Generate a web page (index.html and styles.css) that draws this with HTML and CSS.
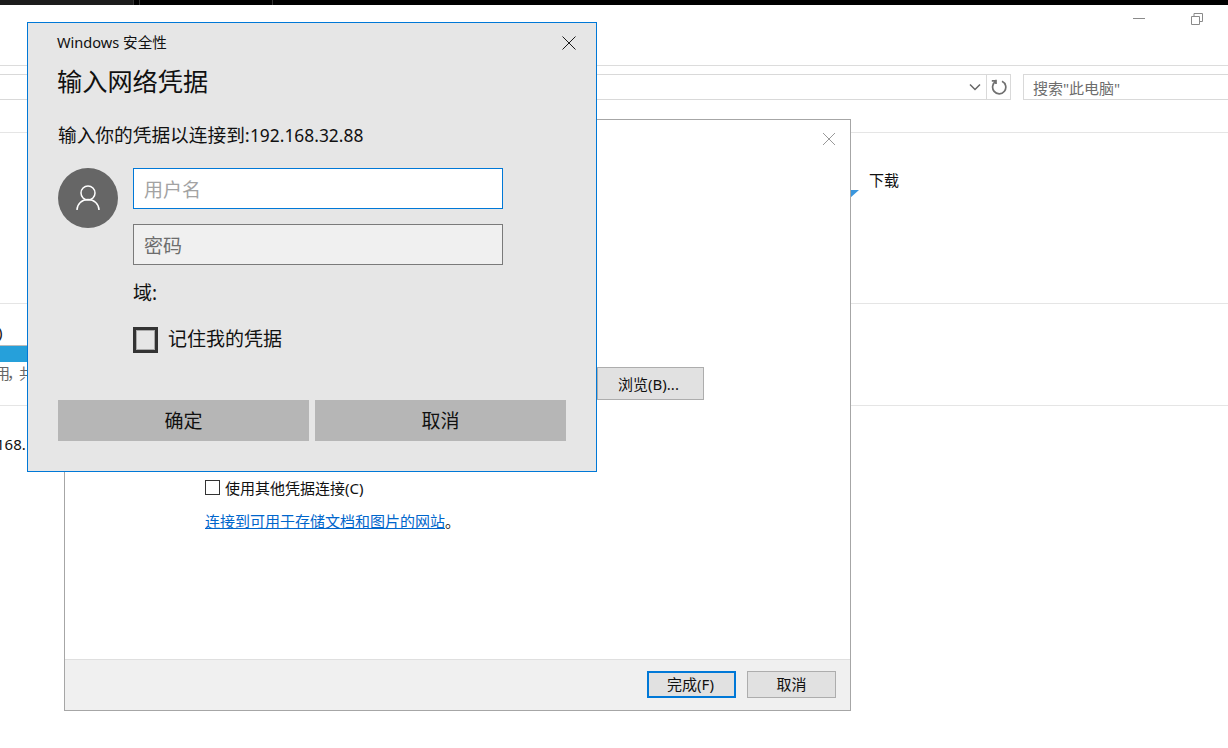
FILE: index.html
```html
<!DOCTYPE html>
<html lang="zh-CN">
<head>
<meta charset="utf-8">
<title>Windows 安全性</title>
<link rel="stylesheet" href="styles.css">
</head>
<body>
<div class="desktop">
  <div class="taskbar">
    <div class="task task-active"></div>
    <div class="task task-second"></div>
  </div>
  <div class="explorer">
    <div class="caption">
      <span class="cap-min"></span>
      <svg class="cap-restore" width="12" height="12" viewBox="0 0 12 12"><path d="M.5 3.500h8v8h-8zM3 3.500V.5h8.500v8H8.500" fill="none" stroke="#8a8a8a"/></svg>
    </div>
    <div class="addressbar">
      <div class="address">
        <svg class="chev" width="12" height="8" viewBox="0 0 12 8"><path d="M1 1.500l5 5 5-5" fill="none" stroke="#666" stroke-width="1.500"/></svg>
        <div class="refresh">
          <svg width="16" height="16" viewBox="0 0 16 16"><path d="M5.200 2.300A6.600 6.600 0 1 0 11 2.200M5 .8v4.200M.8 1.800h4.700" fill="none" stroke="#707070" stroke-width="1.700"/></svg>
        </div>
      </div>
      <div class="search">搜索"此电脑"</div>
    </div>
    <div class="ribbon">
      <span class="download">下载</span>
    </div>
    <div class="section">
      <span class="drive-name">D)</span>
      <div class="drive-bar"></div>
      <span class="drive-info">用，共</span>
    </div>
    <div class="netloc">168.</div>
  </div>

  <span class="tri"></span>

  <div class="wizard">
    <svg class="wiz-close" width="14" height="14" viewBox="0 0 14 14"><path d="M1 1l12 12M13 1L1 13" stroke="#999" fill="none"/></svg>
    <div class="wiz-body">
      <button class="browse">浏览(B)...</button>
      <label class="other-cred"><span class="small-check"></span>使用其他凭据连接(C)</label>
      <p class="site-line"><a class="site-link">连接到可用于存储文档和图片的网站</a>。</p>
    </div>
    <div class="wiz-foot">
      <button class="wiz-btn wiz-primary">完成(F)</button>
      <button class="wiz-btn">取消</button>
    </div>
  </div>

  <div class="dialog">
    <div class="dlg-title">
      <span class="dlg-app">Windows 安全性</span>
      <svg width="14" height="14" viewBox="0 0 14 14"><path d="M.5.500l13 13M13.500.500l-13 13" stroke="#1a1a1a" fill="none"/></svg>
    </div>
    <h1 class="dlg-head">输入网络凭据</h1>
    <p class="dlg-sub">输入你的凭据以连接到:<span class="dlg-ip">192.168.32.88</span></p>
    <div class="cred">
      <div class="avatar">
        <svg width="26" height="28" viewBox="0 0 26 28"><circle cx="13" cy="9" r="7" fill="none" stroke="#fff" stroke-width="1.500"/><path d="M2 26c0-6 5-10.500 11-10.500S24 20 24 26" fill="none" stroke="#fff" stroke-width="1.500"/></svg>
      </div>
      <div class="fields">
        <div class="field field-focus">用户名</div>
        <div class="field field-off">密码</div>
        <div class="domain">域:</div>
        <label class="remember"><span class="big-check"></span>记住我的凭据</label>
      </div>
    </div>
    <div class="dlg-btns">
      <button class="dlg-btn">确定</button>
      <button class="dlg-btn">取消</button>
    </div>
  </div>
</div>
</body>
</html>
```
FILE: styles.css
```css
* { box-sizing: border-box; }
html, body { margin: 0; padding: 0; }
body { font-family: "Noto Sans", "Noto Sans CJK SC", sans-serif; color: #111; background: #fff; }
button { font-family: inherit; padding: 0; color: inherit; }
.desktop { position: relative; width: 1228px; height: 748px; overflow: hidden; background: #fff; }

.taskbar { height: 5px; background: #000; display: flex; }
.task { height: 5px; }
.task-active { width: 134px; background: #1c1c1c; border-right: 1px solid #333; }
.task-second { width: 134px; margin-left: 5px; background: #000; border-left: 1px solid #333; border-right: 1px solid #333; }

.explorer { font-size: 15px; }
.caption { height: 61px; border-bottom: 1px solid #dcdcdc; display: flex; justify-content: flex-end; padding: 8px 25px 0 0; }
.cap-min { width: 12px; height: 1px; background: #8a8a8a; margin: 5px 46px 0 0; }
.cap-restore { margin-top: 0; }

.addressbar { display: flex; height: 26px; margin-top: 8px; gap: 12px; }
.address { width: 1011px; height: 26px; border: 1px solid #d9d9d9; border-left: 0; display: flex; justify-content: flex-end; align-items: center; }
.chev { margin-right: 5px; }
.refresh { width: 24px; height: 24px; border-left: 1px solid #d9d9d9; display: flex; align-items: center; justify-content: center; }
.search { flex: 1; height: 26px; border: 1px solid #d9d9d9; border-right: 0; padding-left: 9px; line-height: 26px; font-size: 15px; color: #6d6d6d; }

.ribbon { height: 172px; margin-top: 32px; border-top: 1px solid #e5e5e5; border-bottom: 1px solid #e5e5e5; padding: 36px 0 0 869px; line-height: 22px; }
.download { font-size: 15px; }
.section { height: 102px; border-bottom: 1px solid #e5e5e5; position: relative; padding-top: 17px; }
.drive-name { display: block; margin-left: -13px; line-height: 22px; font-size: 15px; }
.drive-bar { width: 30px; height: 17px; margin-top: 2px; background: #26a0da; border-top: 1px solid #bcbcbc; }
.drive-info { display: block; margin-left: -5px; letter-spacing: -3px; line-height: 22px; font-size: 15px; color: #666; }
.netloc { margin: 27px 0 0 -4px; line-height: 22px; font-size: 15px; }

.tri { position: absolute; left: 850px; top: 190px; width: 9px; height: 8px; background: #3a96dd; clip-path: polygon(0 0, 100% 0, 0 100%); }

.wizard { position: absolute; left: 64px; top: 119px; width: 787px; height: 592px; background: #fff; border: 1px solid #a6a6a6; display: flex; flex-direction: column; font-size: 15px; }
.wiz-close { position: absolute; left: 757px; top: 12px; }
.wiz-body { flex: 1; padding: 247px 0 0 140px; }
.browse { display: block; margin-left: 392px; width: 107px; height: 33px; background: #e1e1e1; border: 1px solid #adadad; font-size: 15px; padding-right: 4px; }
.other-cred { display: flex; align-items: center; margin-top: 76px; height: 22px; color: #111; }
.small-check { width: 15px; height: 15px; border: 1px solid #333; background: #fff; margin-right: 5px; }
.site-line { margin: 12px 0 0; line-height: 22px; height: 22px; }
.site-link { color: #0066cc; text-decoration: underline; }
.wiz-foot { height: 51px; background: #f0f0f0; border-top: 1px solid #dfdfdf; display: flex; justify-content: flex-end; gap: 11px; padding: 11px 14px 0 0; }
.wiz-btn { width: 89px; height: 27px; background: #e1e1e1; border: 1px solid #adadad; font-size: 15px; line-height: 22px; padding-bottom: 2px; }
.wiz-primary { border: 2px solid #0078d7; padding-right: 2px; }

.dialog { position: absolute; left: 27px; top: 22px; width: 570px; height: 450px; background: #e6e6e6; border: 1px solid #0078d7; padding: 0 30px; color: #111; }
.dlg-title { height: 40px; display: flex; justify-content: space-between; align-items: center; margin-left: -1px; margin-right: -10px; font-size: 14.600px; }
.dlg-app { padding-bottom: 4px; }
.dlg-head { margin: 0 0 0 -1px; height: 40px; font-size: 25.200px; font-weight: 400; line-height: 36px; }
.dlg-sub { margin: 18px 0 0; height: 28px; font-size: 18.700px; line-height: 28px; }
.dlg-ip { font-size: 17.400px; }
.cred { display: flex; margin-top: 19px; gap: 15px; }
.avatar { width: 60px; height: 60px; border-radius: 50%; background: #666; display: flex; align-items: center; justify-content: center; }
.fields { width: 370px; }
.field { height: 41px; padding-left: 10px; font-size: 19px; }
.field-focus { background: #fff; border: 1px solid #0078d7; color: #a3a3a3; line-height: 43px; }
.field-off { margin-top: 15px; background: #f0f0f0; border: 1px solid #7a7a7a; color: #6d6d6d; line-height: 43px; }
.domain { margin-top: 14px; height: 28px; font-size: 19px; line-height: 28px; }
.remember { display: flex; align-items: flex-start; margin-top: 20px; height: 26px; font-size: 19px; line-height: 24px; }
.big-check { width: 25px; height: 26px; border: 3px solid #333; outline: 1px solid #aaa; outline-offset: -4px; background: #e6e6e6; margin-right: 10px; }
.dlg-btns { display: flex; gap: 6px; margin-top: 47px; }
.dlg-btn { width: 251px; height: 41px; background: #b6b6b6; border: 0; font-size: 19px; padding-bottom: 1px; }
```
